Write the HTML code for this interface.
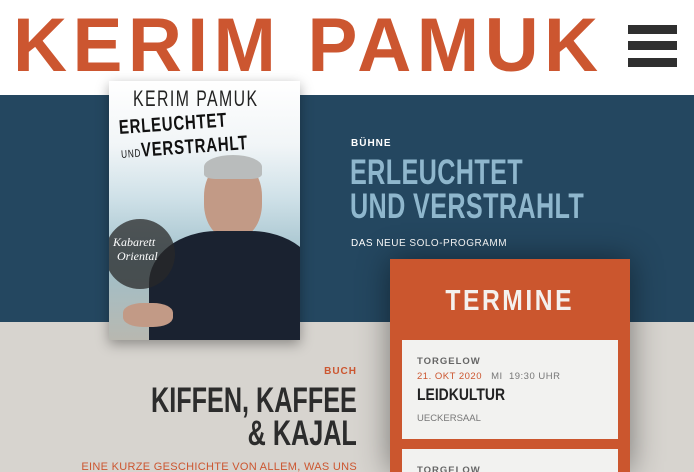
<!DOCTYPE html>
<html><head><meta charset="utf-8"><style>
*{margin:0;padding:0;box-sizing:border-box}
html,body{width:694px;height:472px;overflow:hidden}
body{position:relative;background:#d7d4cf;font-family:"Liberation Sans",sans-serif}
.hdr{position:absolute;left:0;top:0;width:694px;height:95px;background:#fff}
.logo{position:absolute;left:13px;top:4px;font-size:76px;line-height:84px;color:#cc5630;letter-spacing:5.5px;white-space:nowrap;font-weight:bold;transform:scaleX(.985);transform-origin:left}
.bar{position:absolute;left:628px;width:49px;height:9px;background:#2f2f2f}
.blue{position:absolute;left:0;top:95px;width:694px;height:227px;background:#244760}
.t{position:absolute;white-space:nowrap}
.c{font-weight:bold;display:inline-block}
.book{position:absolute;left:109px;top:81px;width:191px;height:259px;overflow:hidden;box-shadow:0 4px 12px rgba(0,0,0,.35);background:linear-gradient(180deg,#fff 0%,#f1f5f7 25%,#cfe1e8 45%,#9fbfca 70%,#b8b8b0 100%)}
.card{position:absolute;left:390px;top:259px;width:240px;height:213px;background:#cb562e;box-shadow:0 0 30px rgba(0,0,0,.45)}
.ev{position:absolute;left:12px;width:216px;background:#f2f2f0}
</style></head><body>
<div class="hdr"></div>
<div class="logo">KERIM PAMUK</div>
<div class="bar" style="top:25px"></div><div class="bar" style="top:41px"></div><div class="bar" style="top:58px"></div>
<div class="blue"></div>

<div class="book">
 <div class="t" style="left:24px;top:5px;font-size:22px;letter-spacing:2px;color:#222;transform:scaleX(.72);transform-origin:left">KERIM PAMUK</div>
 <div class="t c" style="left:10px;top:36px;font-size:20px;letter-spacing:1px;color:#111;transform:rotate(-4deg) scaleX(.75);transform-origin:left">ERLEUCHTET</div>
 <div class="t c" style="left:12px;top:60px;font-size:20px;letter-spacing:1px;color:#111;transform:rotate(-4deg) scaleX(.75);transform-origin:left"><span style="font-size:11px;font-weight:normal">UND</span>VERSTRAHLT</div>
 <div style="position:absolute;left:95px;top:80px;width:58px;height:78px;border-radius:45%;background:#c29a86"></div>
 <div style="position:absolute;left:95px;top:74px;width:58px;height:24px;border-radius:50% 50% 20% 20%;background:#b9bcbc"></div>
 <div style="position:absolute;left:40px;top:150px;width:170px;height:130px;border-radius:40% 40% 0 0;background:#1a2230"></div>
 <div style="position:absolute;left:-4px;top:138px;width:70px;height:70px;border-radius:50%;background:rgba(40,40,40,.75)"></div>
 <div class="t" style="left:4px;top:154px;font-size:12px;color:#fff;font-family:'Liberation Serif',serif;font-style:italic">Kabarett</div>
 <div class="t" style="left:8px;top:168px;font-size:12px;color:#fff;font-family:'Liberation Serif',serif;font-style:italic">Oriental</div>
 <div style="position:absolute;left:14px;top:222px;width:50px;height:24px;border-radius:40%;background:#c29a86"></div>
</div>

<div class="t" style="left:351px;top:138px;font-size:10px;font-weight:bold;letter-spacing:1px;color:#fff">BÜHNE</div>
<div class="t c" style="left:350px;top:156px;font-size:35px;line-height:34px;color:#8fb7cd;letter-spacing:.5px;transform:scaleX(.72);transform-origin:left">ERLEUCHTET<br>UND VERSTRAHLT</div>
<div class="t" style="left:351px;top:238px;font-size:10px;letter-spacing:.5px;color:#fff">DAS NEUE SOLO-PROGRAMM</div>

<div class="t" style="right:337px;top:366px;font-size:10px;font-weight:bold;letter-spacing:1px;color:#cc5630">BUCH</div>
<div class="t c" style="right:337px;top:384px;font-size:35px;line-height:33px;color:#2c2c2c;text-align:right;transform:scaleX(.72);transform-origin:right">KIFFEN, KAFFEE<br>&amp; KAJAL</div>
<div class="t" style="right:337px;top:461px;font-size:11px;letter-spacing:.3px;color:#cc5630">EINE KURZE GESCHICHTE VON ALLEM, WAS UNS</div>

<div class="card">
 <div class="t" style="left:0;width:240px;text-align:center;top:26px"><span class="c" style="font-size:29px;letter-spacing:3px;color:#f4f1ee;transform:scaleX(.85)">TERMINE</span></div>
 <div class="ev" style="top:81px;height:99px">
  <div class="t" style="left:15px;top:16px;font-size:9.5px;font-weight:bold;letter-spacing:1px;color:#666">TORGELOW</div>
  <div class="t" style="left:15px;top:31px;font-size:9.5px;letter-spacing:.5px;color:#cc5630">21. OKT 2020 <span style="color:#777;margin-left:6px">MI&nbsp; 19:30 UHR</span></div>
  <div class="t c" style="left:15px;top:45px;font-size:17px;color:#222;transform:scaleX(.82);transform-origin:left">LEIDKULTUR</div>
  <div class="t" style="left:15px;top:73px;font-size:9.5px;color:#777">UECKERSAAL</div>
 </div>
 <div class="ev" style="top:190px;height:30px">
  <div class="t" style="left:15px;top:16px;font-size:9.5px;font-weight:bold;letter-spacing:1px;color:#666">TORGELOW</div>
 </div>
</div>
</body></html>
